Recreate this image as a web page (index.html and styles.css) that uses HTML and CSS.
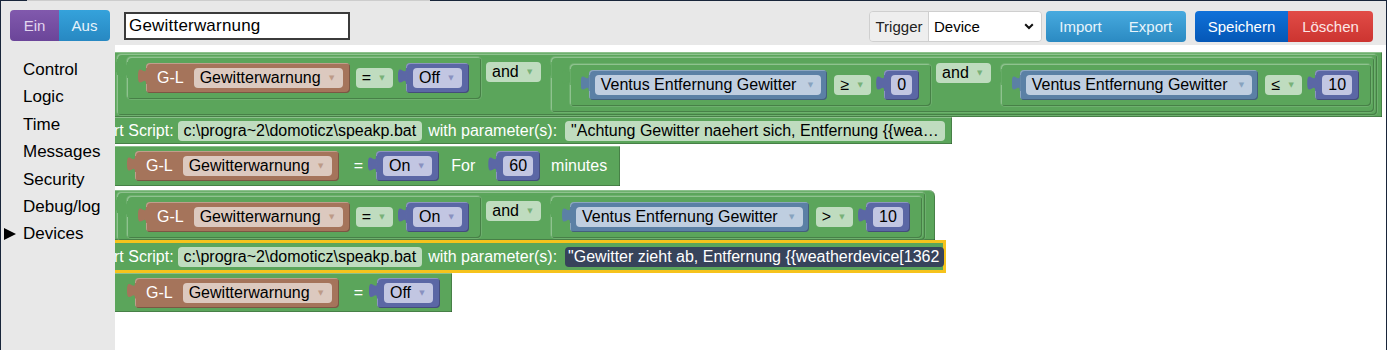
FILE: index.html
```html
<!DOCTYPE html>
<html>
<head>
<meta charset="utf-8">
<title>Blockly Event</title>
<link rel="stylesheet" href="styles.css">
</head>
<body>
<div class="frame">
  <div class="tabedge"><span class="te-dark"></span><span class="te-light"></span><span class="te-dark2"></span></div>
  <header class="topbar">
    <div class="toggle"><span class="t-ein">Ein</span><span class="t-aus">Aus</span></div>
    <div class="name-input">Gewitterwarnung</div>
    <div class="grow"></div>
    <div class="trigger">
      <span class="trig-lbl">Trigger</span>
      <span class="trig-sel">Device<svg class="chev" width="10" height="7" viewBox="0 0 10 7"><path d="M1.2 1.2 L5 5 L8.8 1.2" fill="none" stroke="#111" stroke-width="2"/></svg></span>
    </div>
    <div class="btn-group info"><span class="b-imp">Import</span><span class="b-exp">Export</span></div>
    <div class="btn-group actions"><span class="save">Speichern</span><span class="del">Löschen</span></div>
  </header>
  <div class="main">
    <nav class="toolbox">
      <div class="tb-item">Control</div>
      <div class="tb-item">Logic</div>
      <div class="tb-item">Time</div>
      <div class="tb-item">Messages</div>
      <div class="tb-item">Security</div>
      <div class="tb-item">Debug/log</div>
      <div class="tb-item open">Devices</div>
    </nav>
    <div class="workspace">
      <!-- if block -->
      <div class="stmt r1">
        <div class="sub andblk">
          <div class="sub cmp">
            <div class="vb brown"><span class="lbl">G-L</span><span class="f fb">Gewitterwarnung<i class="dd">▼</i></span></div>
            <span class="f fg op">=<i class="dd">▼</i></span>
            <div class="vb purple nxt"><span class="f fp">Off<i class="dd">▼</i></span></div>
          </div>
          <span class="f fg andf">and<i class="dd">▼</i></span>
          <div class="sub nested">
            <div class="sub cmp">
              <div class="vb blue"><span class="f fl">Ventus Entfernung Gewitter<i class="dd">▼</i></span></div>
              <span class="f fg op opb">≥<i class="dd">▼</i></span>
              <div class="vb purple nxt"><span class="f fp">0</span></div>
            </div>
            <span class="f fg andf2">and<i class="dd">▼</i></span>
            <div class="sub cmp c3">
              <div class="vb blue"><span class="f fl">Ventus Entfernung Gewitter<i class="dd">▼</i></span></div>
              <span class="f fg op opb">≤<i class="dd">▼</i></span>
              <div class="vb purple nxt"><span class="f fp">10</span></div>
            </div>
          </div>
        </div>
      </div>
      <div class="stmt r2">
        <span class="scr-lbl">Start Script:</span>
        <span class="f fg path">c:\progra~2\domoticz\speakp.bat</span>
        <span class="with">with parameter(s):</span>
        <span class="f fg param">"Achtung Gewitter naehert sich, Entfernung {{wea…</span>
      </div>
      <div class="stmt r3">
        <div class="vb brown"><span class="lbl">G-L</span><span class="f fb">Gewitterwarnung<i class="dd">▼</i></span></div>
        <span class="eq">=</span>
        <div class="vb purple set"><span class="f fp">On<i class="dd">▼</i></span></div>
        <span class="txt for">For</span>
        <div class="vb purple sixty"><span class="f fp">60</span></div>
        <span class="txt mins">minutes</span>
      </div>
      <!-- second if block -->
      <div class="stmt r4">
        <div class="sub andblk ab2">
          <div class="sub cmp">
            <div class="vb brown"><span class="lbl">G-L</span><span class="f fb">Gewitterwarnung<i class="dd">▼</i></span></div>
            <span class="f fg op">=<i class="dd">▼</i></span>
            <div class="vb purple nxt"><span class="f fp">On<i class="dd">▼</i></span></div>
          </div>
          <span class="f fg andf">and<i class="dd">▼</i></span>
          <div class="sub cmp c2b">
            <div class="vb blue"><span class="f fl">Ventus Entfernung Gewitter<i class="dd">▼</i></span></div>
            <span class="f fg op opb">&gt;<i class="dd">▼</i></span>
            <div class="vb purple nxt"><span class="f fp">10</span></div>
          </div>
        </div>
      </div>
      <div class="stmt r5">
        <span class="scr-lbl">Start Script:</span>
        <span class="f fg path">c:\progra~2\domoticz\speakp.bat</span>
        <span class="with">with parameter(s):</span>
        <span class="f sel-f">"Gewitter zieht ab, Entfernung {{weatherdevice[1362</span>
      </div>
      <div class="stmt r6">
        <div class="vb brown"><span class="lbl">G-L</span><span class="f fb">Gewitterwarnung<i class="dd">▼</i></span></div>
        <span class="eq">=</span>
        <div class="vb purple set2"><span class="f fp">Off<i class="dd">▼</i></span></div>
      </div>
    </div>
  </div>
</div>
</body>
</html>
```

FILE: styles.css
```css
* { box-sizing: border-box; margin: 0; padding: 0; }
html, body { margin: 0; }
body {
  background: #e8e8e8;
  font-family: "Liberation Sans", Arial, sans-serif;
}
.frame {
  width: 1387px;
  height: 350px;
  overflow: hidden;
  display: flex;
  flex-direction: column;
  border-left: 1px solid #18253a;
  border-right: 1px solid #18253a;
  background: #e8e8e8;
}
.tabedge { height: 1px; display: flex; flex: none; }
.te-dark { width: 26px; background: #18253a; }
.te-light { width: 403px; background: #cdcdcd; }
.te-dark2 { flex: 1; background: #18253a; }

/* ---------- top bar ---------- */
.topbar {
  height: 44px;
  flex: none;
  display: flex;
  align-items: flex-start;
  padding: 9px 13px 0 9px;
  font-size: 15px;
}
.toggle {
  display: flex;
  height: 31px;
  border-radius: 4px;
  overflow: hidden;
  line-height: 31px;
  text-align: center;
}
.t-ein {
  width: 49px;
  background: linear-gradient(#8159ad, #6b4599);
  color: #e2d6ef;
}
.t-aus {
  width: 51px;
  background: linear-gradient(#35a2db, #2788c2);
  color: #e6f3fb;
}
.name-input {
  margin-left: 14px;
  margin-top: 2px;
  width: 226px;
  height: 28px;
  border: 2px solid #3b3b3b;
  background: #fff;
  font-size: 17px;
  line-height: 24px;
  padding-left: 3px;
  color: #000;
  letter-spacing: 0.2px;
}
.grow { flex: 1; }
.trigger {
  display: flex;
  margin-top: 1px;
  height: 31px;
  border: 1px solid #cfcfcf;
  border-radius: 4px;
  overflow: hidden;
  line-height: 29px;
}
.trig-lbl {
  width: 59px;
  background: #eeeeee;
  color: #222;
  text-align: center;
  border-right: 1px solid #cfcfcf;
}
.trig-sel {
  width: 112px;
  background: #fff;
  color: #000;
  display: flex;
  align-items: center;
  justify-content: space-between;
  padding: 0 7px 0 5px;
}
.btn-group {
  display: flex;
  margin-top: 1px;
  height: 31px;
  border-radius: 4px;
  overflow: hidden;
  line-height: 31px;
  text-align: center;
}
.info {
  margin-left: 4px;
  background: linear-gradient(#47aadf, #2b8ac2);
  color: #e8f4fb;
}
.b-imp { width: 69px; }
.b-exp { width: 71px; }
.actions { margin-left: 9px; }
.save {
  width: 93px;
  background: linear-gradient(#0f71d9, #0557b6);
  color: #fff;
}
.del {
  width: 85px;
  background: linear-gradient(#e14c47, #cc3430);
  color: #fce6e6;
}

/* ---------- main ---------- */
.main { flex: 1; display: flex; min-height: 0; }
.toolbox {
  width: 114px;
  flex: none;
  padding-top: 11px;
  background: #e8e8e8;
}
.tb-item {
  position: relative;
  height: 27.4px;
  line-height: 27.4px;
  padding-left: 22px;
  font-size: 17px;
  color: #000;
}
.tb-item.open::before {
  content: "";
  position: absolute;
  left: 3px;
  top: 8px;
  border-left: 12px solid #000;
  border-top: 6px solid transparent;
  border-bottom: 6px solid transparent;
}

.workspace {
  flex: 1;
  background: #fff;
  overflow: hidden;
  padding-top: 7px;
  display: flex;
  flex-direction: column;
  align-items: flex-start;
  font-size: 16px;
  color: #fff;
  white-space: nowrap;
}

/* ---------- blocks ---------- */
.stmt {
  flex: none;
  display: flex;
  align-items: center;
  background: #5ba55b;
  position: relative;
  box-shadow: inset 0 1px 0 rgba(255,255,255,.3), inset 0 -1px 0 rgba(0,0,0,.22), inset -1px 0 0 rgba(0,0,0,.22);
}
.r1 { width: 1267px; height: 65px; align-items: flex-start; padding: 2px 0 0 2px; }
.r2 { width: 837px; height: 27px; }
.r3 { width: 505px; height: 40px; margin-top: 2px; padding-left: 20px; }
.r4 { width: 820px; height: 50px; margin-top: 4px; align-items: flex-start; padding: 2px 0 0 2px; border-top-right-radius: 6px; }
.r5 { width: 831px; height: 33px; border: 3px solid #f6c31c; border-left: 0; box-shadow: none; }
.r6 { width: 337px; height: 39px; padding-left: 20px; }

.sub {
  display: flex;
  background: #5ba55b;
  border-radius: 4px;
  position: relative;
  box-shadow: inset 1px 1px 0 rgba(255,255,255,.32), inset -1px -1px 0 rgba(0,0,0,.22), 0 0 0 1px rgba(255,255,255,.12);
}
.sub::before, .vb::before {
  content: "";
  position: absolute;
  left: -8px;
  top: 5px;
  width: 9px;
  height: 16px;
  background: inherit;
  clip-path: path('M9,0 L8,0 C8,10 0,-7 0,8 S8,6 8,16 L9,16 Z');
}
.andblk { align-items: flex-start; padding: 3px 3px 3px 10px; }
.ab2 { padding: 4px 3px 2px 10px; }
.cmp { align-items: center; padding: 6px 12px 6px 19px; }
.nested { align-items: flex-start; margin-left: 10px; padding: 7px 3px 6px 19px; }
.c3 { margin-left: 10px; }
.c2b { margin-left: 10px; }
.andf { margin-left: 5px; margin-top: 5px; }
.andf2 { margin-left: 5px; margin-top: -1px; }

.vb {
  display: flex;
  align-items: center;
  height: 30px;
  padding: 0 7px;
  border-radius: 4px;
  position: relative;
  box-shadow: inset 1px 1px 0 rgba(255,255,255,.3), inset -1px -1px 0 rgba(0,0,0,.25);
}
.brown { background: #a5745b; padding-left: 11px; }
.blue { background: #5b80a5; padding: 0 6px; }
.purple { background: #5b67a5; }
.lbl { margin-right: 10px; color: #fff; }
.nxt { margin-left: 13px; }

.f {
  display: inline-flex;
  align-items: center;
  height: 20px;
  padding: 0 6px;
  border-radius: 4px;
  color: #000;
  white-space: nowrap;
  flex: none;
}
.fb { background: #dcc9bf; }
.fg { background: #bfdcbf; }
.fl { background: #bfcee0; }
.fp { background: #c2c6e2; }
.dd {
  font-style: normal;
  font-family: "DejaVu Sans", sans-serif;
  font-size: 7px;
  width: 10px;
  margin-left: 6px;
  text-align: center;
  opacity: .55;
}
.fb .dd { color: #a5745b; }
.fg .dd { color: #3f8f3f; }
.fl .dd { color: #5b80a5; margin-left: 9px; }
.fp .dd { color: #5b67a5; }
.op { margin-left: 6px; }
.opb { margin-left: 7px; }

.scr-lbl { margin-left: -25px; }
.path { margin-left: 4px; }
.with { margin-left: 6px; }
.param { margin-left: 8px; width: 380px; }
.sel-f {
  margin-left: 8px;
  width: 379px;
  overflow: hidden;
  background: #37435b;
  color: #fff;
  padding: 0 3px;
}

.eq { margin-left: 15px; }
.set { margin-left: 13px; }
.set2 { margin-left: 14px; }
.for { margin-left: 12px; }
.sixty { margin-left: 21px; }
.mins { margin-left: 11px; }
```
